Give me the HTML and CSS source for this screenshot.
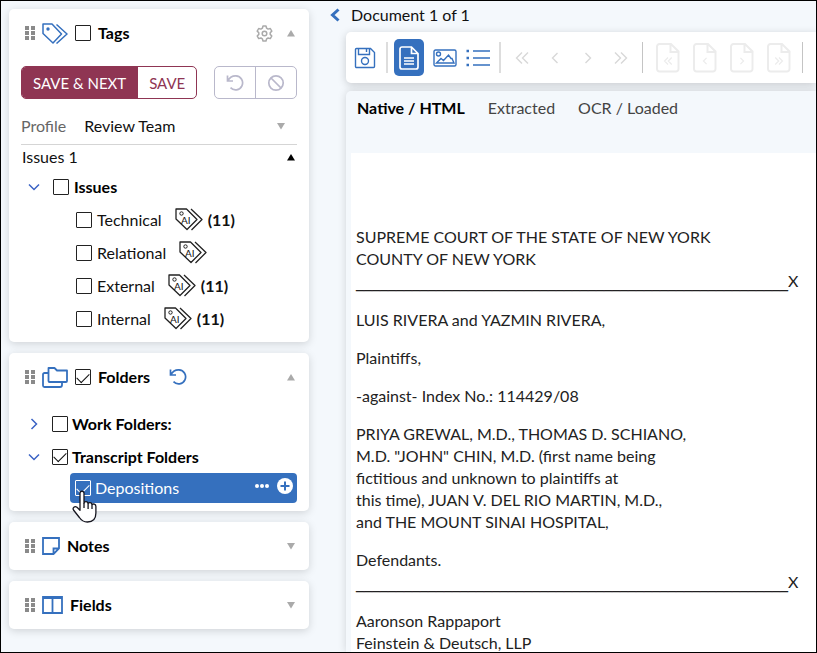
FILE: index.html
```html
<!DOCTYPE html>
<html lang="en">

<head>
    <meta charset="UTF-8">
    <meta name="viewport" content="width=device-width, initial-scale=1.0">
    <title>Document Review</title>
    <link rel="stylesheet" href="styles.css">
</head>

<body>

    <!-- Shared icons -->
    <svg class="sprite" aria-hidden="true">
        <symbol id="i-dots" viewBox="0 0 10 14">
            <path d="M0 0h4v4H0zM6 0h4v4H6zM0 5h4v4H0zM6 5h4v4H6zM0 10h4v4H0zM6 10h4v4H6z" fill="#8a8a8a" />
        </symbol>
        <symbol id="i-up" viewBox="0 0 10 8"><path d="M1 7.500L5 1l4 6.500z" fill="currentColor" /></symbol>
        <symbol id="i-down" viewBox="0 0 10 8"><path d="M1 1l4 6.500L9 1z" fill="currentColor" /></symbol>
        <symbol id="i-undo" viewBox="0 0 18 18">
            <path d="M1.500 1.500v5.500h5.500M1.800 6.800C4 3 7 1.700 10 1.900a7 7 0 1 1-5.500 11.800" fill="none" stroke="currentColor" stroke-width="1.700" />
        </symbol>
        <symbol id="i-chev-down" viewBox="0 0 14 14"><path d="M2 4.500l5 5 5-5" fill="none" stroke="#3a62c4" stroke-width="1.500" /></symbol>
        <symbol id="i-chev-right" viewBox="0 0 14 14"><path d="M4.500 2l5 5-5 5" fill="none" stroke="#3a62c4" stroke-width="1.500" /></symbol>
        <symbol id="i-ai" viewBox="0 0 28 23">
            <path d="M1 1h10.500L22 11.500 12 21.500 1 11zM16 1l11 10.500-10.500 10.500" fill="none" stroke="#222" stroke-width="1.300" stroke-linejoin="round" />
            <circle cx="6.500" cy="5.500" r="1.700" fill="#fff" stroke="#222" />
            <text x="6" y="15.500" font-size="10" fill="#111">AI</text>
        </symbol>
        <symbol id="i-left" viewBox="0 0 16 16"><path d="M10.500 3l-5 5 5 5" /></symbol>
        <symbol id="i-right" viewBox="0 0 16 16"><path d="M5.500 3l5 5-5 5" /></symbol>
        <symbol id="i-first" viewBox="0 0 16 16"><path d="M8 2.500L2.500 8 8 13.500M14 2.500L8.500 8l5.500 5.500" /></symbol>
        <symbol id="i-last" viewBox="0 0 16 16"><path d="M2 2.500L7.500 8 2 13.500M8 2.500L13.500 8 8 13.500" /></symbol>
        <symbol id="i-page" viewBox="0 0 24 30">
            <path d="M3.500 1h11.500l7.500 7.500v17.500a2.500 2.500 0 0 1-2.500 2.500H3.500A2.500 2.500 0 0 1 1 26V3.500A2.500 2.500 0 0 1 3.500 1zM14.500 1v8h8" />
        </symbol>
    </svg>

    <aside class="sidebar">
        <section class="card tags">
            <header class="card-header">
                <svg class="dots"><use href="#i-dots" /></svg>
                <svg class="icon-wide" viewBox="0 0 26 21">
                    <path d="M1 1h9l9.500 10-8.500 9L1 10.500zM14.500 1.500L25 11l-10.500 9.500" fill="none" stroke="#3570be" stroke-width="1.500" stroke-linejoin="round" />
                    <circle cx="6" cy="6" r="1.700" fill="#3570be" />
                </svg>
                <input type="checkbox" id="tags">
                <label class="title" for="tags">Tags</label>
                <button class="icon-btn gear push" aria-label="Settings">
                    <svg width="17" height="17" viewBox="0 0 17 17" fill="none" stroke="currentColor" stroke-width="1.500" stroke-linejoin="round">
                        <path d="M7 1h3l.6 2.200 1.500.9 2.200-.6 1.500 2.600-1.600 1.600v1.700l1.600 1.600-1.500 2.600-2.200-.6-1.500.9L10 16H7l-.6-2.100-1.500-.9-2.200.6-1.500-2.600 1.600-1.600V7.700L1.200 6.100l1.500-2.600 2.200.6 1.500-.9z" />
                        <circle cx="8.500" cy="8.500" r="2.300" />
                    </svg>
                </button>
                <button class="icon-btn" aria-label="Collapse tags"><svg class="arrow"><use href="#i-up" /></svg></button>
            </header>

            <div class="actions">
                <div class="btn-group">
                    <button class="btn primary">SAVE &amp; NEXT</button>
                    <button class="btn">SAVE</button>
                </div>
                <div class="btn-group muted">
                    <button class="btn" aria-label="Undo"><svg width="18" height="18"><use href="#i-undo" /></svg></button>
                    <button class="btn" aria-label="Clear">
                        <svg width="18" height="18" viewBox="0 0 18 18" fill="none" stroke="currentColor" stroke-width="1.700">
                            <circle cx="9" cy="9" r="7.200" />
                            <path d="M4 4l10 10" />
                        </svg>
                    </button>
                </div>
            </div>

            <div class="profile">
                <label for="profile">Profile</label>
                <select id="profile">
                    <option>Review Team</option>
                </select>
                <svg class="arrow"><use href="#i-down" /></svg>
            </div>

            <button class="group-toggle">Issues 1 <svg class="arrow"><use href="#i-up" /></svg></button>

            <ul class="tree">
                <li class="row">
                    <button class="icon-btn" aria-label="Collapse issues"><svg width="14" height="14"><use href="#i-chev-down" /></svg></button>
                    <input type="checkbox" id="issues"><label class="strong" for="issues">Issues</label>
                </li>
                <li class="row child">
                    <input type="checkbox" id="technical"><label for="technical">Technical</label>
                    <svg class="ai"><use href="#i-ai" /></svg><b>(11)</b>
                </li>
                <li class="row child">
                    <input type="checkbox" id="relational"><label for="relational">Relational</label>
                    <svg class="ai"><use href="#i-ai" /></svg>
                </li>
                <li class="row child">
                    <input type="checkbox" id="external"><label for="external">External</label>
                    <svg class="ai"><use href="#i-ai" /></svg><b>(11)</b>
                </li>
                <li class="row child">
                    <input type="checkbox" id="internal"><label for="internal">Internal</label>
                    <svg class="ai"><use href="#i-ai" /></svg><b>(11)</b>
                </li>
            </ul>
        </section>

        <section class="card folders">
            <header class="card-header">
                <svg class="dots"><use href="#i-dots" /></svg>
                <svg class="icon-wide" viewBox="0 0 26 21" fill="none" stroke="#3570be" stroke-width="1.800" stroke-linejoin="round">
                    <path d="M6.500 1h6l2.500 2.500h10V14a1 1 0 0 1-1 1H7.500a1 1 0 0 1-1-1zM6 6H2.500A1.500 1.500 0 0 0 1 7.500v11A1.500 1.500 0 0 0 2.500 20H18a2 2 0 0 0 2-2v-3" />
                </svg>
                <input type="checkbox" id="folders" checked>
                <label class="title" for="folders">Folders</label>
                <button class="icon-btn undo" aria-label="Undo"><svg width="18" height="18"><use href="#i-undo" /></svg></button>
                <button class="icon-btn push" aria-label="Collapse folders"><svg class="arrow"><use href="#i-up" /></svg></button>
            </header>
            <ul class="tree">
                <li class="row">
                    <button class="icon-btn" aria-label="Expand"><svg width="14" height="14"><use href="#i-chev-right" /></svg></button>
                    <input type="checkbox" id="work"><label class="strong" for="work">Work Folders:</label>
                </li>
                <li class="row">
                    <button class="icon-btn" aria-label="Collapse"><svg width="14" height="14"><use href="#i-chev-down" /></svg></button>
                    <input type="checkbox" id="transcript" checked><label class="strong" for="transcript">Transcript Folders</label>
                </li>
                <li class="row selected">
                    <input type="checkbox" id="depositions" checked><label for="depositions">Depositions</label>
                    <button class="icon-btn push" aria-label="More">
                        <svg width="16" height="16" viewBox="0 0 16 16" fill="#fff">
                            <circle cx="3" cy="8" r="2" /><circle cx="8" cy="8" r="2" /><circle cx="13" cy="8" r="2" />
                        </svg>
                    </button>
                    <button class="icon-btn" aria-label="Add">
                        <svg width="16" height="16" viewBox="0 0 16 16">
                            <circle cx="8" cy="8" r="8" fill="#fff" />
                            <path d="M8 3.500v9M3.500 8h9" stroke="#3570be" stroke-width="2" />
                        </svg>
                    </button>
                    <svg class="pointer" viewBox="0 0 25 33">
                        <path d="M8 3.200C8 .6 12 .6 12 3.200V13c.6-2 3.900-1.800 4.100.5.900-1.500 3.700-1 3.900 1 1.200-1 3.900-.5 3.900 2V23c0 6-3 9-8.500 9-4 0-6-1.500-8-4.500L1.500 20c-1.300-2.200 1.200-4.500 3.500-2.700l3 2.900z" fill="#fff" stroke="#15151f" stroke-width="1.300" stroke-linejoin="round" />
                        <path d="M12 13v5M16.100 13.500V19M20 14.500V19" stroke="#15151f" stroke-width="1.300" />
                    </svg>
                </li>
            </ul>
        </section>

        <section class="card">
            <header class="card-header">
                <svg class="dots"><use href="#i-dots" /></svg>
                <svg width="18" height="18" viewBox="0 0 18 18" fill="none" stroke="#3570be" stroke-width="1.800">
                    <path d="M1 1h16v10.500L11.500 17H1zM11.500 17v-5.500H17" />
                </svg>
                <span class="title">Notes</span>
                <button class="icon-btn push" aria-label="Expand notes"><svg class="arrow"><use href="#i-down" /></svg></button>
            </header>
        </section>

        <section class="card">
            <header class="card-header">
                <svg class="dots"><use href="#i-dots" /></svg>
                <svg width="21" height="18" viewBox="0 0 21 18" fill="none" stroke="#3570be" stroke-width="1.800">
                    <path d="M1 1h19v16H1zM10.500 1v16M1 2h19" />
                </svg>
                <span class="title">Fields</span>
                <button class="icon-btn push" aria-label="Expand fields"><svg class="arrow"><use href="#i-down" /></svg></button>
            </header>
        </section>
    </aside>

    <main class="viewer">
        <div class="doc-nav">
            <button class="icon-btn" aria-label="Back">
                <svg width="12" height="14" viewBox="0 0 12 14"><path d="M9.500 1.500L3.500 7l6 5.500" fill="none" stroke="#3570be" stroke-width="3" /></svg>
            </button>
            <span>Document 1 of 1</span>
        </div>

        <div class="toolbar">
            <button class="tool" aria-label="Save">
                <svg width="22" height="22" viewBox="0 0 22 22">
                    <path d="M2.500 1.500h14l4 4v14a1 1 0 0 1-1 1h-17a1 1 0 0 1-1-1v-17a1 1 0 0 1 1-1zM4.500 1.500v6h11v-6M12.500 2v3" />
                    <circle cx="11" cy="14" r="3.500" />
                </svg>
            </button>
            <span class="divider"></span>
            <button class="tool active" aria-label="Document view">
                <svg width="20" height="24" viewBox="0 0 20 24">
                    <path d="M3 1h9.500L19 7.500V21a2 2 0 0 1-2 2H3a2 2 0 0 1-2-2V3a2 2 0 0 1 2-2zM12.500 1v6.500H19M5 12h10M5 15h10M5 18h10" stroke-width="1.700" />
                </svg>
            </button>
            <button class="tool" aria-label="Image view">
                <svg width="24" height="18" viewBox="0 0 24 18">
                    <rect x="1" y="1" width="22" height="16" rx="1.500" />
                    <circle cx="5.500" cy="5" r="2" />
                    <path d="M3.500 14l4.500-4.500 2.500 2L15.500 6l2.500 3.500h1l2 4.500z" />
                </svg>
            </button>
            <button class="tool" aria-label="List view">
                <svg width="24" height="18" viewBox="0 0 24 18">
                    <path d="M7 2h17M7 9h17M7 16h17" />
                    <path d="M.500 2h2.500M.500 9h2.500M.500 16h2.500" stroke-width="2.500" />
                </svg>
            </button>
            <span class="divider"></span>
            <div class="pager">
                <button class="tool" disabled aria-label="First"><svg width="16" height="16"><use href="#i-first" /></svg></button>
                <button class="tool" disabled aria-label="Previous"><svg width="16" height="16"><use href="#i-left" /></svg></button>
                <button class="tool" disabled aria-label="Next"><svg width="16" height="16"><use href="#i-right" /></svg></button>
                <button class="tool" disabled aria-label="Last"><svg width="16" height="16"><use href="#i-last" /></svg></button>
            </div>
            <span class="divider thin"></span>
            <div class="pager pages">
                <button class="tool" disabled aria-label="First page">
                    <svg width="24" height="30"><use href="#i-page" /><use href="#i-first" x="7" y="13" width="10" height="10" /></svg>
                </button>
                <button class="tool" disabled aria-label="Previous page">
                    <svg width="24" height="30"><use href="#i-page" /><use href="#i-left" x="7" y="13" width="10" height="10" /></svg>
                </button>
                <button class="tool" disabled aria-label="Next page">
                    <svg width="24" height="30"><use href="#i-page" /><use href="#i-right" x="7" y="13" width="10" height="10" /></svg>
                </button>
                <button class="tool" disabled aria-label="Last page">
                    <svg width="24" height="30"><use href="#i-page" /><use href="#i-last" x="7" y="13" width="10" height="10" /></svg>
                </button>
            </div>
            <span class="divider thin"></span>
            <div class="pager pages">
                <button class="tool" disabled aria-label="Page"><svg width="24" height="30"><use href="#i-page" /></svg></button>
            </div>
        </div>

        <div class="document">
            <nav class="tabs">
                <button class="tab current">Native / HTML</button>
                <button class="tab">Extracted</button>
                <button class="tab">OCR / Loaded</button>
            </nav>
            <article class="page">
                <p>SUPREME COURT OF THE STATE OF NEW YORK<br>
                    COUNTY OF NEW YORK<br>
                    <span class="rule">______________________________________________________</span>X</p>
                <p>LUIS RIVERA and YAZMIN RIVERA,</p>
                <p>Plaintiffs,</p>
                <p>-against- Index No.: 114429/08</p>
                <p>PRIYA GREWAL, M.D., THOMAS D. SCHIANO,<br>
                    M.D. "JOHN" CHIN, M.D. (first name being<br>
                    fictitious and unknown to plaintiffs at<br>
                    this time), JUAN V. DEL RIO MARTIN, M.D.,<br>
                    and THE MOUNT SINAI HOSPITAL,</p>
                <p>Defendants.<br>
                    <span class="rule">______________________________________________________</span>X</p>
                <p>Aaronson Rappaport<br>
                    Feinstein &amp; Deutsch, LLP</p>
            </article>
        </div>
    </main>

</body>

</html>
```

FILE: styles.css
```css
* {
    margin: 0;
    padding: 0;
    box-sizing: border-box;
}

body {
    display: flex;
    height: 100vh;
    overflow: hidden;
    border: 1px solid #000;
    background: #f4f8fc;
    color: #111;
    font-family: Lato, sans-serif;
    font-size: 16px;
    line-height: 22px;
}

button,
input,
select {
    font: inherit;
    color: inherit;
}

button {
    border: none;
    background: none;
    cursor: pointer;
}

svg {
    display: block;
    flex-shrink: 0;
}

.sprite {
    display: none;
}

input[type="checkbox"] {
    appearance: none;
    flex-shrink: 0;
    display: grid;
    place-items: center;
    width: 16px;
    height: 16px;
    border: 1px solid #222;
    border-radius: 1px;
}

input[type="checkbox"]:checked::before {
    content: "";
    width: 11px;
    height: 6px;
    border: solid currentColor;
    border-width: 0 0 1px 1px;
    transform: translateY(-1px) rotate(-45deg);
}

/* Sidebar */
.sidebar {
    display: flex;
    flex-direction: column;
    flex-shrink: 0;
    gap: 11px;
    width: 308px;
    padding: 8px 0 8px 8px;
}

.card {
    flex-shrink: 0;
    border-radius: 5px;
    background: #fff;
    box-shadow: 0 2px 8px rgba(0, 0, 0, 0.15);
}

.card-header {
    display: flex;
    align-items: center;
    gap: 7px;
    height: 48px;
    padding: 0 13px 0 16px;
}

.title,
.strong {
    font-weight: bold;
    color: #000;
}

.dots {
    width: 10px;
    height: 14px;
}

.icon-wide {
    width: 26px;
    height: 21px;
}

.icon-btn {
    display: flex;
}

.push {
    margin-left: auto;
}

.arrow {
    width: 10px;
    height: 8px;
    color: #aaa;
}

.gear {
    margin-right: 6px;
    color: #aaa;
}

.undo {
    margin-left: 12px;
    color: #3570be;
}

.actions {
    display: flex;
    justify-content: space-between;
    margin: 9px 12px;
}

.btn-group {
    display: flex;
    height: 33px;
    border: 1px solid #8f3553;
    border-radius: 5px;
    overflow: hidden;
    color: #8f3553;
    font-size: 15px;
}

.btn {
    display: flex;
    align-items: center;
    padding: 0 11px;
}

.btn + .btn {
    border-left: 1px solid;
}

.primary {
    background: #8f3553;
    color: #fff;
}

.muted {
    border-color: #b9b8cb;
    color: #b9b8cb;
}

.profile {
    display: flex;
    align-items: center;
    height: 37px;
    margin: 0 12px;
    padding-right: 11px;
    border-bottom: 1px solid #d5d5d5;
}

.profile label {
    color: #666;
}

.profile select {
    flex: 1;
    margin-left: 18px;
    border: none;
    background: none;
    appearance: none;
}

.group-toggle {
    display: flex;
    align-items: center;
    justify-content: space-between;
    width: 100%;
    height: 24px;
    padding: 0 13px;
}

.group-toggle .arrow {
    color: #000;
}

.tree {
    list-style: none;
    padding: 1px 0 7px;
}

.row {
    display: flex;
    align-items: center;
    gap: 5px;
    height: 33px;
    padding-left: 18px;
}

.row .icon-btn + input {
    margin-left: 7px;
}

.child {
    padding-left: 67px;
}

.ai {
    width: 28px;
    height: 23px;
    margin-left: 8px;
}

.folders .tree {
    padding: 6px 0 8px;
}

.folders .row {
    gap: 4px;
}

.selected {
    position: relative;
    margin: 0 12px 0 61px;
    border-radius: 4px;
    background: #3570be;
    color: #fff;
}

.folders .selected {
    height: 30px;
    padding: 0 4px 0 5px;
}

.selected input[type="checkbox"] {
    border-color: #fff;
}

.selected .push {
    margin-right: 3px;
}

.selected .icon-btn {
    margin-bottom: 4px;
}

.pointer {
    position: absolute;
    left: 2px;
    top: 17px;
    width: 25px;
    height: 33px;
}

/* Viewer */
.viewer {
    display: flex;
    flex-direction: column;
    flex: 1;
    min-width: 0;
    padding-left: 37px;
}

.doc-nav {
    display: flex;
    align-items: center;
    gap: 10px;
    height: 31px;
    margin-left: -17px;
    padding-bottom: 4px;
}

.toolbar {
    display: flex;
    align-items: center;
    flex-shrink: 0;
    height: 51px;
    padding-left: 7px;
    border-radius: 5px 0 0 5px;
    background: #fff;
    box-shadow: 0 2px 8px rgba(0, 0, 0, 0.18);
    overflow: hidden;
}

.tool {
    display: flex;
    align-items: center;
    justify-content: center;
    flex-shrink: 0;
    width: 24px;
    height: 37px;
}

.tool svg {
    fill: none;
    stroke: #3570be;
    stroke-width: 1.4px;
}

.tool + .tool {
    margin-left: 9px;
}

.tool.active {
    width: 30px;
    border-radius: 5px;
    background: #3570be;
}

.tool.active svg {
    stroke: #fff;
}

.tool:disabled svg {
    stroke: #d8d8d8;
}

.divider {
    flex-shrink: 0;
    width: 2px;
    height: 31px;
    margin: 0 6px 0 9px;
    background: #ddd;
}

.divider.thin {
    width: 1px;
    background: #c4c4c4;
}

.pager {
    display: flex;
    padding-left: 3px;
}

.pages {
    padding-left: 5px;
}

.pages .tool {
    width: 28px;
}

.pages .tool:disabled svg {
    stroke: #ececec;
    stroke-width: 2px;
}

.document {
    display: flex;
    flex-direction: column;
    flex: 1;
    min-height: 0;
    margin-top: 8px;
    padding-left: 5px;
    border-radius: 5px 0 0 0;
    background: #f4f8fc;
    box-shadow: 0 0 8px rgba(0, 0, 0, 0.15);
}

.tabs {
    display: flex;
    flex-shrink: 0;
    gap: 23px;
    height: 62px;
    padding: 6px;
}

.tab {
    height: 22px;
    color: #444;
}

.tab.current {
    font-weight: bold;
    color: #000;
}

.page {
    flex: 1;
    min-height: 0;
    padding: 73px 5px 0;
    background: #fff;
    color: #222;
    overflow: hidden;
    white-space: nowrap;
}

.page p {
    margin-bottom: 16px;
}

.rule {
    font-family: "DejaVu Sans", sans-serif;
}
```
